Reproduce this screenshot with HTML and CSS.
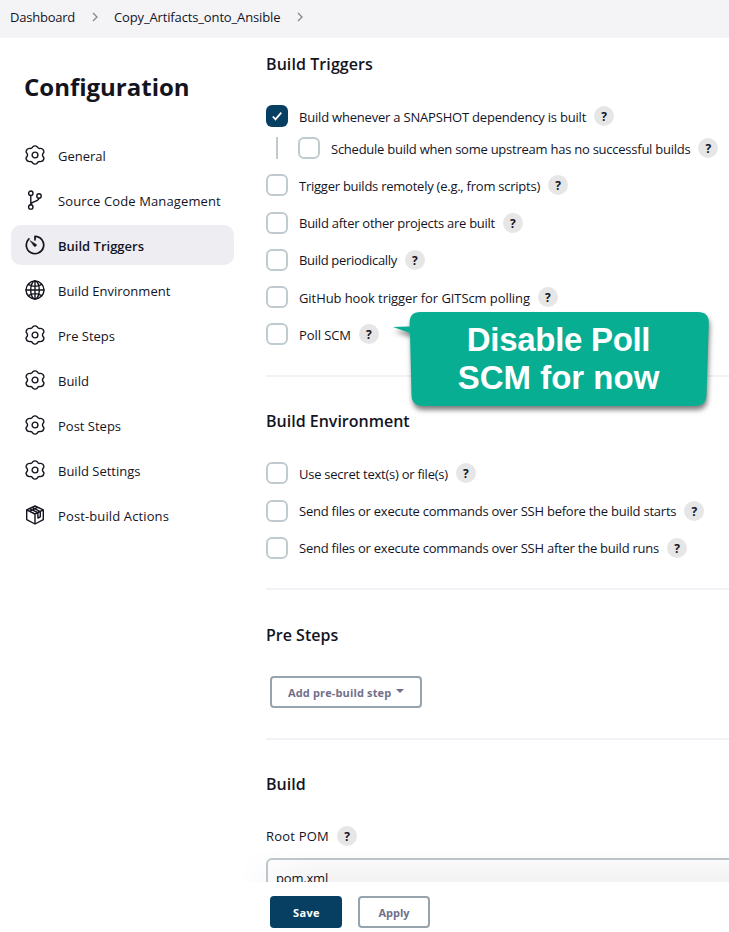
FILE: index.html
```html
<!DOCTYPE html>
<html lang="en">
<head>
<meta charset="utf-8">
<title>Copy_Artifacts_onto_Ansible Config</title>
<link rel="stylesheet" href="styles.css">
</head>
<body>
<svg class="defs" aria-hidden="true">
  <symbol id="gear" viewBox="0 0 20 20">
    <path d="M7.600 2.100Q10 -.4 12.400 2.100Q13 3.700 15 3.400Q18.300 3.300 18.900 6.400Q19.200 7.400 18 8.400Q17 10 18 11.600Q19.200 12.600 18.900 13.600Q18.300 16.700 15 16.600Q13 16.300 12.400 17.900Q10 20.400 7.600 17.900Q7 16.300 5 16.600Q1.700 16.700 1.100 13.600Q.8 12.600 2 11.600Q3 10 2 8.400Q.8 7.400 1.100 6.400Q1.700 3.300 5 3.400Q7 3.700 7.600 2.100Z"/>
    <circle cx="10" cy="10" r="2.900"/>
  </symbol>
  <symbol id="chevron" viewBox="0 0 8 10"><path d="M2 1L6 5L2 9"/></symbol>
</svg>

<nav class="breadcrumbs">
  <span class="crumb-home">Dashboard</span>
  <svg class="chevron"><use href="#chevron"/></svg>
  <span class="crumb-job">Copy_Artifacts_onto_Ansible</span>
  <svg class="chevron"><use href="#chevron"/></svg>
</nav>

<div class="layout">
  <aside class="side">
    <h1>Configuration</h1>
    <ul class="tasks">
      <li><svg class="icon"><use href="#gear"/></svg><span>General</span></li>
      <li><svg class="icon" viewBox="0 0 20 20"><circle cx="5.800" cy="3.200" r="2.200"/><circle cx="5.800" cy="16.900" r="2.200"/><circle cx="14" cy="5.900" r="2.200"/><path d="M5.800 5.400V14.700M14 8.100C13.900 12.300 6.500 10.300 5.900 14.500"/></svg><span class="wide">Source Code Management</span></li>
      <li class="active"><svg class="icon timer" viewBox="0 0 20 20"><path d="M10 4.800V1.300A8.700 8.700 0 1 1 3.900 3.800"/><path class="needle" d="M5.300 5.800L11.300 9.400A1.500 1.500 0 0 1 9.300 11.400Z"/></svg><span>Build Triggers</span></li>
      <li><svg class="icon" viewBox="0 0 20 20"><circle cx="10" cy="10" r="9"/><ellipse cx="10" cy="10" rx="4.300" ry="9"/><path d="M10 1V19M1 10H19M3.300 4.400Q10 8.400 16.700 4.400M3.300 15.600Q10 11.600 16.700 15.600"/></svg><span>Build Environment</span></li>
      <li><svg class="icon"><use href="#gear"/></svg><span>Pre Steps</span></li>
      <li><svg class="icon"><use href="#gear"/></svg><span>Build</span></li>
      <li><svg class="icon"><use href="#gear"/></svg><span>Post Steps</span></li>
      <li><svg class="icon"><use href="#gear"/></svg><span>Build Settings</span></li>
      <li><svg class="icon" viewBox="0 0 20 20"><path d="M10 1L18.300 4.900V14.600L10 19L1.700 14.600V4.900ZM1.700 4.900L10 9L18.300 4.900M10 9V19M7.200 2.400L15.300 6.600V11.800L12.900 13V7.700L4.500 3.600M4.500 6.300L12.700 2.300"/></svg><span class="wide">Post-build Actions</span></li>
    </ul>
  </aside>

  <main class="content">
    <section class="triggers">
      <h2>Build Triggers</h2>
      <div class="option"><i class="box checked"><svg viewBox="0 0 22 22"><path d="M6.800 11.500L9.500 14.400L15.300 7.600"/></svg></i><label class="t-snapshot">Build whenever a SNAPSHOT dependency is built</label><b class="help">?</b></div>
      <div class="option nested"><i class="box"></i><label>Schedule build when some upstream has no successful builds</label><b class="help">?</b></div>
      <div class="option"><i class="box"></i><label>Trigger builds remotely (e.g., from scripts)</label><b class="help">?</b></div>
      <div class="option loose raised"><i class="box"></i><label class="t-after">Build after other projects are built</label><b class="help">?</b></div>
      <div class="option raised"><i class="box"></i><label class="t-periodic">Build periodically</label><b class="help">?</b></div>
      <div class="option"><i class="box"></i><label class="t-regular">GitHub hook trigger for GITScm polling</label><b class="help">?</b></div>
      <div class="option poll"><i class="box"></i><label class="t-regular">Poll SCM</label><b class="help">?</b>
        <div class="callout">
          <svg viewBox="0 0 320 98"><path d="M28 1H306Q317 1 316.800 12L314.500 84Q314 95 303 95H31Q20 95 19.500 84L18 22L1 16L17.600 15.500V12Q17.600 1 28 1Z"/></svg>
          <p><span>Disable Poll</span><br>SCM for now</p>
        </div>
      </div>
    </section>

    <section class="environment">
      <h2>Build Environment</h2>
      <div class="option"><i class="box"></i><label>Use secret text(s) or file(s)</label><b class="help">?</b></div>
      <div class="option loose raised"><i class="box"></i><label class="t-before">Send files or execute commands over SSH before the build starts</label><b class="help">?</b></div>
      <div class="option raised"><i class="box"></i><label class="t-ssh">Send files or execute commands over SSH after the build runs</label><b class="help">?</b></div>
    </section>

    <section class="presteps">
      <h2>Pre Steps</h2>
      <button class="btn add">Add pre-build step<span class="caret"></span></button>
    </section>

    <section class="build">
      <h2>Build</h2>
      <div class="field"><label>Root POM</label><b class="help">?</b></div>
      <div class="input">pom.xml</div>
    </section>
  </main>
</div>

<footer class="savebar">
  <button class="btn primary">Save</button>
  <button class="btn">Apply</button>
</footer>
</body>
</html>
```
FILE: styles.css
```css
* { box-sizing: border-box; }

html, body { height: 932px; overflow: hidden; }

body {
  position: relative;
  margin: 0;
  background: #fff;
  color: #14141f;
  font: 13px/20px "Open Sans", "Noto Sans", sans-serif;
}

h1, h2, p, ul { margin: 0; padding: 0; }

.defs { position: absolute; width: 0; height: 0; }

.breadcrumbs {
  display: flex;
  align-items: center;
  height: 38px;
  padding: 0 0 4px 10px;
  background: #f4f4f7;
  white-space: nowrap;
}
.crumb-home { width: 65px; letter-spacing: -0.23px; }
.crumb-job { width: 166px; letter-spacing: -0.14px; }
.chevron {
  width: 8px;
  height: 10px;
  margin: -1px 15px 0 16px;
  fill: none;
  stroke: #85858f;
  stroke-width: 1.3;
}

.layout { display: flex; }

.side { flex: none; width: 266px; padding: 32px 32px 0 11px; }
.side h1 { padding-left: 13px; font-size: 24px; line-height: 34px; font-weight: 700; }
.tasks { display: grid; gap: 5px; margin-top: 31px; list-style: none; }
.tasks li {
  display: flex;
  align-items: center;
  gap: 13px;
  width: 223px;
  height: 40px;
  padding-left: 14px;
  border-radius: 10px;
}
.tasks span { padding-top: 2px; white-space: nowrap; }
.tasks .wide { letter-spacing: 0.12px; }
.tasks .active { background: #ededf2; font-weight: 600; }
.icon {
  flex: none;
  width: 20px;
  height: 20px;
  fill: none;
  stroke: #14141f;
  stroke-width: 1.4;
  stroke-linecap: round;
  stroke-linejoin: round;
}
.timer { stroke-width: 1.7; }
.needle { fill: #14141f; stroke-width: 0.5; }

.content { flex: none; width: 480px; padding-top: 14px; }
section { border-bottom: 2px solid #f1f1f6; }
h2 { margin-bottom: 29px; font-size: 16px; line-height: 24px; font-weight: 600; }
.triggers { padding-bottom: 30px; }
.triggers h2 { letter-spacing: 0.08px; }
.environment { padding: 32px 0 29px; }
.presteps { padding: 33px 0 30px; }
.build { padding-top: 32px; border: 0; }

.option {
  position: relative;
  display: flex;
  align-items: center;
  height: 22px;
  margin-top: 15px;
  white-space: nowrap;
}
h2 + .option { margin-top: 0; }
.option.loose { margin-top: 16px; }
.option label { padding-top: 2px; margin: 0 8px 0 11px; letter-spacing: -0.245px; }
.option.raised label { padding-top: 0; }
.option .t-snapshot { letter-spacing: -0.2px; }
.option .t-after { letter-spacing: -0.26px; }
.option .t-periodic { letter-spacing: -0.32px; }
.option .t-regular { letter-spacing: -0.08px; }
.option .t-before { letter-spacing: -0.235px; }
.option .t-ssh { letter-spacing: -0.235px; }
.option.nested { margin: 10px 0 0 10px; padding-left: 20px; border-left: 2px solid #bfc9ce; }

.box { flex: none; width: 22px; height: 22px; border: 2px solid #c0cbd0; border-radius: 6px; }
.box.checked { border: 0; background: #073f63; }
.box svg { display: block; fill: none; stroke: #fff; stroke-width: 1.8; }

.help {
  flex: none;
  width: 20px;
  height: 20px;
  border-radius: 50%;
  background: #e6e6e6;
  font-size: 12px;
  line-height: 21px;
  text-align: center;
}

.callout { position: absolute; left: 126px; top: -12px; width: 320px; height: 98px; }
.callout svg {
  display: block;
  width: 320px;
  height: 98px;
  overflow: visible;
  fill: #08ae91;
  filter: drop-shadow(1px 4px 2.5px rgba(0, 0, 0, 0.5));
}
.callout p {
  position: absolute;
  inset: 10px 5px 0 18px;
  color: #fff;
  font: bold 33px/38px "Liberation Sans", Arial, sans-serif;
  text-align: center;
}
.callout span { letter-spacing: -0.3px; }

.btn {
  height: 32px;
  padding: 1px 0 0;
  border: 2px solid #98a4ad;
  border-radius: 4px;
  background: #fff;
  color: #70708a;
  font: 700 11px/27px "Open Sans", "Noto Sans", sans-serif;
  width: 72px;
}
.btn.add {
  display: flex;
  align-items: center;
  width: 152px;
  margin-left: 4px;
  padding-left: 16px;
  letter-spacing: 0.14px;
}
.caret { margin: -4px 0 0 5px; border: 4px solid transparent; border-top-color: #70708a; border-bottom: 0; }
.btn.primary { border-color: #073f63; background: #073f63; color: #fff; letter-spacing: 0.35px; padding-left: 1px; }

.field { display: flex; align-items: center; height: 20px; margin-top: 30px; }
.field label { width: 63px; margin-right: 8px; letter-spacing: 0.2px; white-space: nowrap; }
.input {
  height: 40px;
  margin-top: 12px;
  padding: 8px 8px;
  border: 2px solid #bfc9ce;
  border-radius: 6px;
  letter-spacing: -0.19px;
}

.savebar {
  position: absolute;
  left: 250px;
  right: 0;
  bottom: 0;
  display: flex;
  gap: 16px;
  height: 50px;
  padding: 14px 20px 0;
  background: #fff;
}
.savebar::before {
  content: "";
  position: absolute;
  left: -10px;
  right: 0;
  top: -34px;
  height: 34px;
  background: linear-gradient(to top, rgba(0, 0, 0, 0.05), transparent);
  -webkit-mask-image: linear-gradient(to right, transparent, #000 70px);
  mask-image: linear-gradient(to right, transparent, #000 70px);
}
```
